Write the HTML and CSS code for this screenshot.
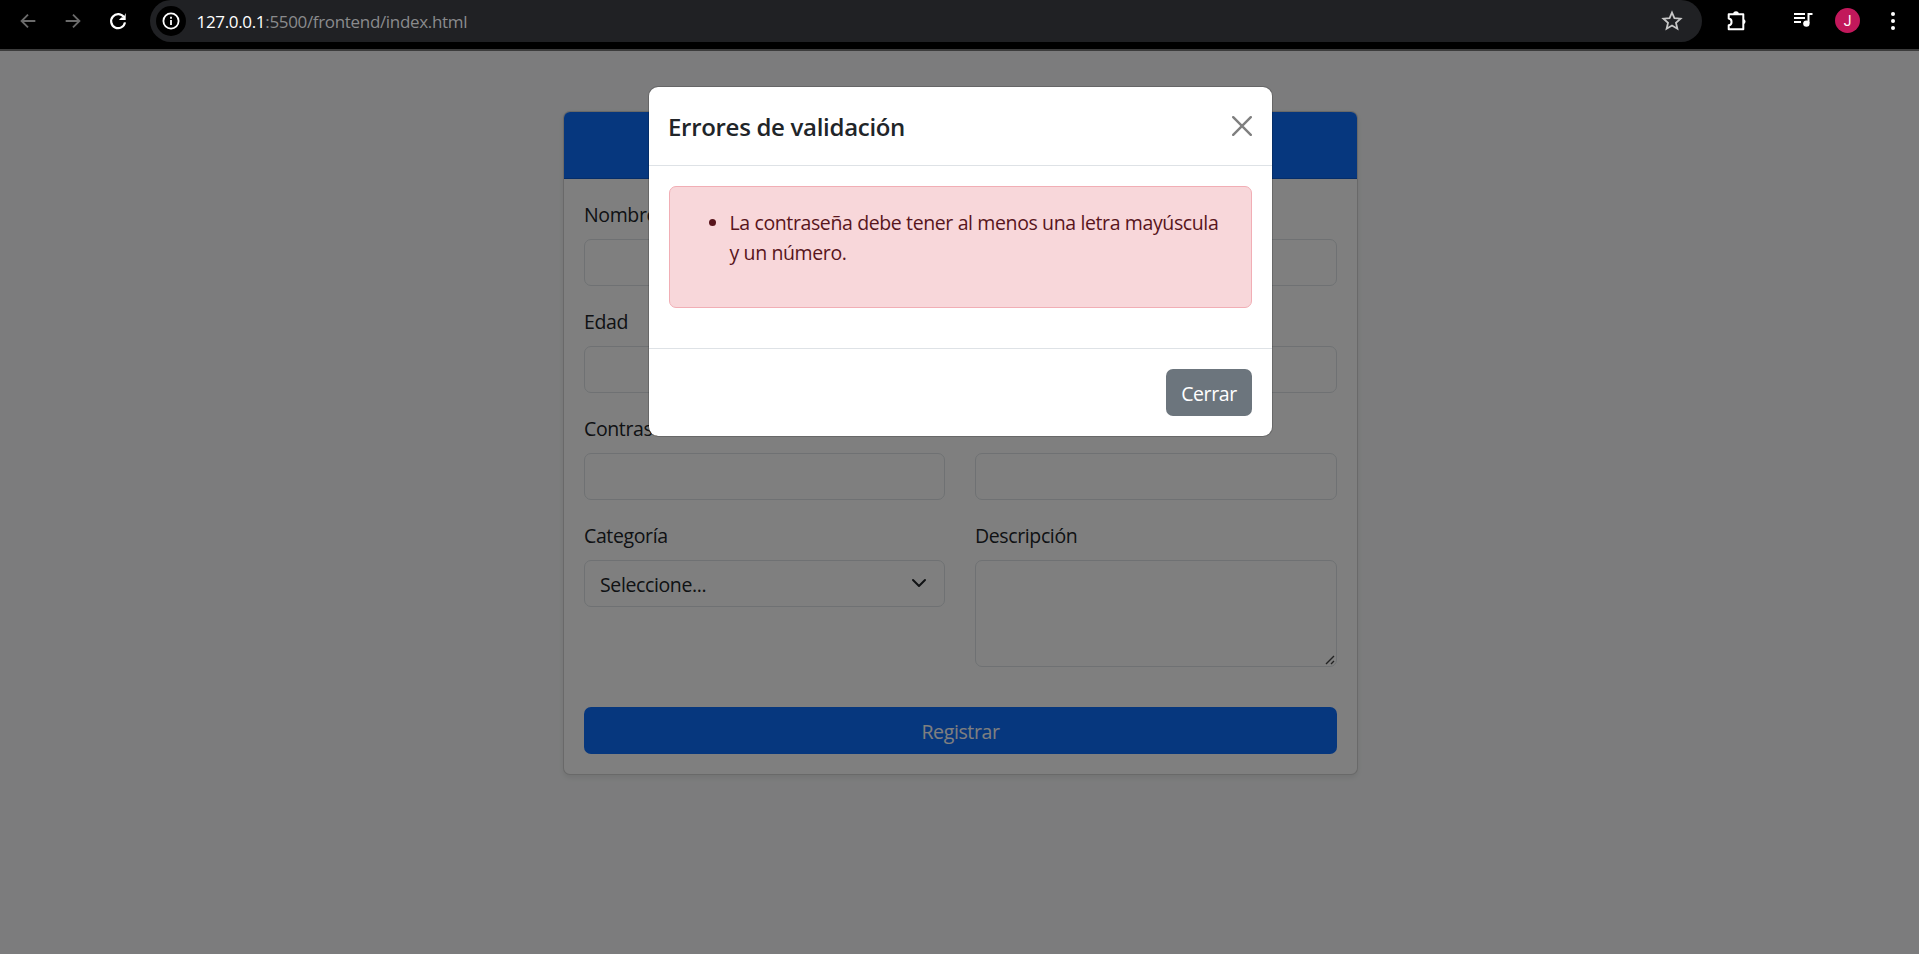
FILE: index.html
```html
<!DOCTYPE html>
<html lang="es">
<head>
<meta charset="utf-8">
<title>Registro</title>
<link rel="stylesheet" href="styles.css">
</head>
<body>
<header class="toolbar">
  <div class="nav">
    <svg class="ico dim" viewBox="0 0 24 24"><path d="M20 12H5M12 5l-7 7 7 7"/></svg>
    <svg class="ico dim" viewBox="0 0 24 24"><path d="M4 12h15M12 5l7 7-7 7"/></svg>
    <svg class="ico reload" viewBox="0 0 24 24"><path d="M18.6 8.2A7.6 7.6 0 1 0 19.6 13.5"/><path class="solid" d="M20.4 3.4v7.4H13l2.6-2.7 2.4.1z"/></svg>
  </div>
  <div class="omnibox">
    <span class="site"><svg class="info" viewBox="0 0 18 18"><circle cx="9" cy="9" r="7.6"/><path d="M9 8v5M9 4.8v1.9"/></svg></span>
    <span class="url"><b>127.0.0.1</b>:5500/frontend/index.html</span>
    <svg class="star" viewBox="0 0 20 20"><path d="M10 2.3l2.2 5.1 5.6.5-4.2 3.7 1.3 5.4-4.9-2.9L5.1 17l1.3-5.4L2.2 7.9l5.6-.5z"/></svg>
  </div>
  <div class="actions">
    <svg class="puzzle" viewBox="0 0 22 22"><path d="M2.7 4.2H17.3V19.300H2.7V15.2C6.500 14.800 6.500 9 2.700 8.600Z"/><path class="solid" d="M7.200 4a2.800 2.800 0 0 1 5.600 0zM17.500 8.900a2.800 2.800 0 0 1 0 5.400z"/></svg>
    <svg class="music" viewBox="0 0 20 16"><path d="M1 2h11M1 6h11M1 10h7"/><path d="M19.500 2h-4v9"/><circle class="solid" cx="13.400" cy="11.600" r="3.200"/></svg>
    <span class="avatar">J</span>
    <span class="menu"><i></i><i></i><i></i></span>
  </div>
</header>
<main class="page">
  <section class="card">
    <div class="card-header"></div>
    <form class="card-body">
      <div class="field"><label>Nombre</label><div class="control"></div></div>
      <div class="field"><label></label><div class="control"></div></div>
      <div class="field"><label>Edad</label><div class="control"></div></div>
      <div class="field"><label></label><div class="control"></div></div>
      <div class="field"><label>Contraseña</label><div class="control"></div></div>
      <div class="field"><label></label><div class="control"></div></div>
      <div class="field"><label>Categoría</label>
        <div class="control select"><span>Seleccione...</span><svg viewBox="0 0 16 16"><path d="m2 5 6 6 6-6"/></svg></div></div>
      <div class="field"><label>Descripción</label>
        <div class="control area"><svg viewBox="0 0 10 10"><path d="M1 9l8-8M6 9l3-3"/></svg></div></div>
      <button class="btn submit" type="button">Registrar</button>
    </form>
  </section>
  <div class="backdrop">
    <div class="modal">
      <div class="modal-header"><h5>Errores de validación</h5>
        <svg viewBox="0 0 20 20"><path d="M1.200 1.200l17.600 17.600M18.800 1.200L1.200 18.800"/></svg></div>
      <div class="modal-body"><div class="alert"><ul><li>La contraseña debe tener al menos una letra mayúscula<br>y un número.</li></ul></div></div>
      <div class="modal-footer"><button class="btn close" type="button">Cerrar</button></div>
    </div>
  </div>
</main>
</body>
</html>
```
FILE: styles.css
```css
* { box-sizing: border-box; }
body {
  margin: 0; height: 954px; overflow: hidden;
  display: flex; flex-direction: column;
  font: 19.5px/30px "Open Sans", "Noto Sans", sans-serif;
  color: #212529; letter-spacing: -0.38px;
}
svg { display: block; fill: none; stroke: currentColor; flex: none; }
.solid { fill: currentColor; stroke: none; }

/* browser toolbar */
.toolbar { height: 51px; flex: none; background: #000; border-bottom: 2px solid #3c3c3c; display: flex; align-items: flex-start; color: #fff; }
.nav { width: 150px; height: 41px; padding-left: 16.5px; display: flex; align-items: center; gap: 23px; }
.ico { width: 22px; height: 22px; stroke-width: 2; }
.nav .dim { color: #6b6b6b; }
.reload { stroke-width: 2.4; }
.omnibox { width: 1552px; height: 42px; background: #202124; border-radius: 21px; display: flex; align-items: center; padding: 0 19px 0 6px; }
.site { width: 30px; height: 30px; border-radius: 50%; background: #000; display: flex; align-items: center; justify-content: center; }
.info { width: 18px; height: 18px; stroke-width: 1.8; }
.url { flex: 1; margin-left: 10.5px; padding-top: 2px; font-size: 17px; letter-spacing: -0.33px; color: #8a8b8d; }
.url b { font-weight: 400; color: #fff; }
.star { width: 22px; height: 22px; color: #c7c7c7; stroke-width: 1.6; }
.actions { flex: 1; height: 41px; display: flex; align-items: center; }
.puzzle { width: 22px; height: 22px; margin-left: 24px; stroke-width: 2; stroke-linejoin: round; }
.music { width: 20px; height: 16px; margin-left: 45px; margin-top: -2px; stroke-width: 2; }
.avatar { width: 25px; height: 25px; margin-left: 22px; border-radius: 50%; background: #c2185b; font: 14px/26px Roboto, sans-serif; text-align: center; }
.menu { margin-left: 30.5px; display: flex; flex-direction: column; gap: 3px; }
.menu i { width: 4px; height: 4px; border-radius: 50%; background: #fff; }

/* form */
.page { flex: 1; position: relative; background: #f8f9fa; padding: 60px 561px 0 563px; }
.card { height: 664px; background: #fff; border: 1px solid rgba(0,0,0,.175); border-radius: 7px; box-shadow: 0 2.5px 5px rgba(0,0,0,.075); }
.card-header { height: 67px; background: #0d6efd; border-bottom: 1px solid #0b5bd1; border-radius: 6px 6px 0 0; }
.card-body { padding: 20px; display: grid; grid-template-columns: 361px 362px; column-gap: 30px; row-gap: 20px; }
label { display: block; height: 30px; margin-bottom: 10px; line-height: 32px; }
.control { height: 47px; border: 1px solid #dee2e6; border-radius: 7px; display: flex; }
.select { align-items: center; justify-content: space-between; padding: 2px 17px 0 15px; }
.select svg { width: 16px; height: 16px; margin-top: -3px; stroke-width: 2; stroke-linecap: round; stroke-linejoin: round; }
.area { height: 107px; align-items: flex-end; justify-content: flex-end; padding: 1px; }
.area svg { width: 10px; height: 10px; stroke-width: 1.4; color: #444; }
.btn { height: 47px; border: 0; border-radius: 7px; color: #fff; font: inherit; letter-spacing: inherit; padding: 2px 0 0; }
.submit { grid-column: 1 / 3; margin-top: 20px; background: #0d6efd; }

/* modal */
.backdrop { position: absolute; inset: 0; background: rgba(0,0,0,.5); padding: 35px 0 0 648px; }
.modal { width: 625px; height: 351px; background: #fff; background-clip: padding-box; border: 1px solid rgba(0,0,0,.175); border-radius: 10px; }
.modal-header { height: 79px; border-bottom: 1px solid #dee2e6; padding: 0 20px; display: flex; align-items: center; justify-content: space-between; }
.modal-header h5 { margin: 2px 0 0 -1px; font-size: 24px; font-weight: 550; letter-spacing: -0.3px; line-height: 38px; }
.modal-header svg { width: 20px; height: 20px; color: #7f7f7f; stroke-width: 2.4; stroke-linecap: round; }
.modal-body { height: 182px; padding: 20px; }
.alert { height: 122px; border: 1px solid #f1aeb5; border-radius: 7px; background: #f8d7da; color: #58151c; padding: 21px 20px 20px; }
.alert ul { margin: 0; padding-left: 39.5px; }
.alert li { white-space: nowrap; }
.modal-footer { border-top: 1px solid #dee2e6; padding: 20px; display: flex; justify-content: flex-end; }
.close { width: 86px; background: #6c757d; }
```
